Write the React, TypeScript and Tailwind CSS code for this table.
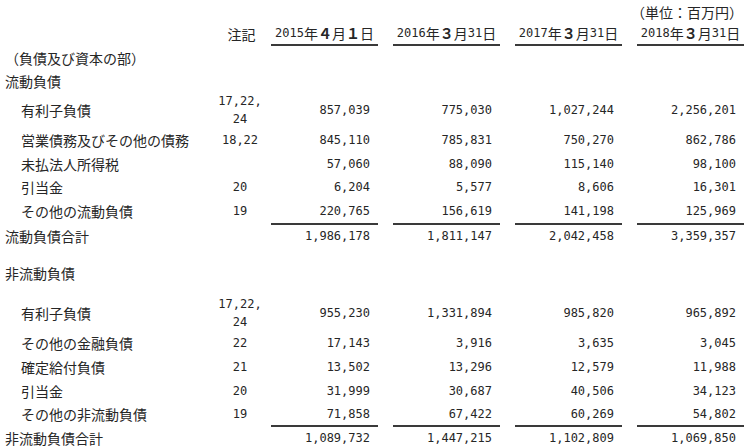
import React from "react";

type Item = {
  label: string;
  note?: string[];
  v: string[];
  h: string;
};

const current: Item[] = [
  { label: "有利子負債", note: ["17,22,", "24"], v: ["857,039", "775,030", "1,027,244", "2,256,201"], h: "h-[36px]" },
  { label: "営業債務及びその他の債務", note: ["18,22"], v: ["845,110", "785,831", "750,270", "862,786"], h: "h-[24px]" },
  { label: "未払法人所得税", v: ["57,060", "88,090", "115,140", "98,100"], h: "h-[23px]" },
  { label: "引当金", note: ["20"], v: ["6,204", "5,577", "8,606", "16,301"], h: "h-[24px]" },
  { label: "その他の流動負債", note: ["19"], v: ["220,765", "156,619", "141,198", "125,969"], h: "h-[24px]" },
];

const nonCurrent: Item[] = [
  { label: "有利子負債", note: ["17,22,", "24"], v: ["955,230", "1,331,894", "985,820", "965,892"], h: "h-[36px]" },
  { label: "その他の金融負債", note: ["22"], v: ["17,143", "3,916", "3,635", "3,045"], h: "h-[24px]" },
  { label: "確定給付負債", note: ["21"], v: ["13,502", "13,296", "12,579", "11,988"], h: "h-[24px]" },
  { label: "引当金", note: ["20"], v: ["31,999", "30,687", "40,506", "34,123"], h: "h-[23px]" },
  { label: "その他の非流動負債", note: ["19"], v: ["71,858", "67,422", "60,269", "54,802"], h: "h-[23px]" },
];

const dates = ["2015年４月１日", "2016年３月31日", "2017年３月31日", "2018年３月31日"];

// half-width runs in a mono font, full-width digits heavier, the rest in the CJK gothic
function Txt({ s }: { s: string }) {
  const parts = s.match(/[\x20-\x7e]+|[０-９]+|[^\x20-\x7e０-９]+/g) || [];
  return (
    <>
      {parts.map((p, i) =>
        /^[\x20-\x7e]+$/.test(p) ? (
          <span key={i} className="font-['DejaVu_Sans_Mono',monospace] text-[12px]">
            {p}
          </span>
        ) : /^[０-９]+$/.test(p) ? (
          <span key={i} className="text-[14px] font-bold">
            {p}
          </span>
        ) : (
          <span key={i} className="text-[14px]">
            {p}
          </span>
        )
      )}
    </>
  );
}

function Cells({ v, line }: { v: string[]; line?: boolean }) {
  return (
    <div className="flex gap-[15px] ml-[3px] h-full">
      {v.map((x, i) => (
        <div
          key={i}
          className={`w-[107px] shrink-0 flex items-center justify-end pr-[8px] ${
            line ? "border-t-2 border-[#3a3a3a]" : ""
          }`}
        >
          <Txt s={x} />
        </div>
      ))}
    </div>
  );
}

function Row({ item }: { item: Item }) {
  return (
    <div className={`flex ${item.h}`}>
      <div className="w-[212px] shrink-0 pl-[21px] flex items-center">
        <Txt s={item.label} />
      </div>
      <div className="w-[56px] shrink-0 flex flex-col items-center justify-center">
        {(item.note || []).map((n, i) => (
          <div key={i} className="h-[18px] flex items-center">
            <Txt s={n} />
          </div>
        ))}
      </div>
      <Cells v={item.v} />
    </div>
  );
}

function Heading({ text, h }: { text: string; h: string }) {
  return (
    <div className={`flex items-center pl-[5px] ${h}`}>
      <Txt s={text} />
    </div>
  );
}

function Total({ label, v }: { label: string; v: string[] }) {
  return (
    <div className="flex h-[24px]">
      <div className="w-[212px] shrink-0 pl-[5px] pt-[2px] flex items-center">
        <Txt s={label} />
      </div>
      <div className="w-[56px] shrink-0" />
      <Cells v={v} line />
    </div>
  );
}

export default function App() {
  return (
    <div className="w-[751px] h-[447px] overflow-hidden bg-white text-[#262626] font-['Noto_Sans_CJK_JP',sans-serif] leading-none">
      <div className="flex h-[21px] justify-end items-center pr-[13px]">
        <div className="w-[107px] text-right">
          <Txt s="（単位：百万円）" />
        </div>
      </div>
      <div className="flex h-[25px]">
        <div className="w-[212px] shrink-0" />
        <div className="w-[56px] shrink-0 flex items-center justify-center pl-[3px]">
          <Txt s="注記" />
        </div>
        <div className="flex gap-[15px] ml-[3px]">
          {dates.map((d) => (
            <div
              key={d}
              className="w-[107px] shrink-0 flex items-center justify-center border-b-2 border-[#3a3a3a]"
            >
              <Txt s={d} />
            </div>
          ))}
        </div>
      </div>
      <Heading text="（負債及び資本の部）" h="h-[23px]" />
      <Heading text="流動負債" h="h-[23px]" />
      {current.map((it) => (
        <Row key={it.label} item={it} />
      ))}
      <Total label="流動負債合計" v={["1,986,178", "1,811,147", "2,042,458", "3,359,357"]} />
      <div className="h-[14px]" />
      <Heading text="非流動負債" h="h-[24px]" />
      <div className="h-[10px]" />
      {nonCurrent.map((it) => (
        <Row key={it.label + "n"} item={it} />
      ))}
      <Total label="非流動負債合計" v={["1,089,732", "1,447,215", "1,102,809", "1,069,850"]} />
    </div>
  );
}
